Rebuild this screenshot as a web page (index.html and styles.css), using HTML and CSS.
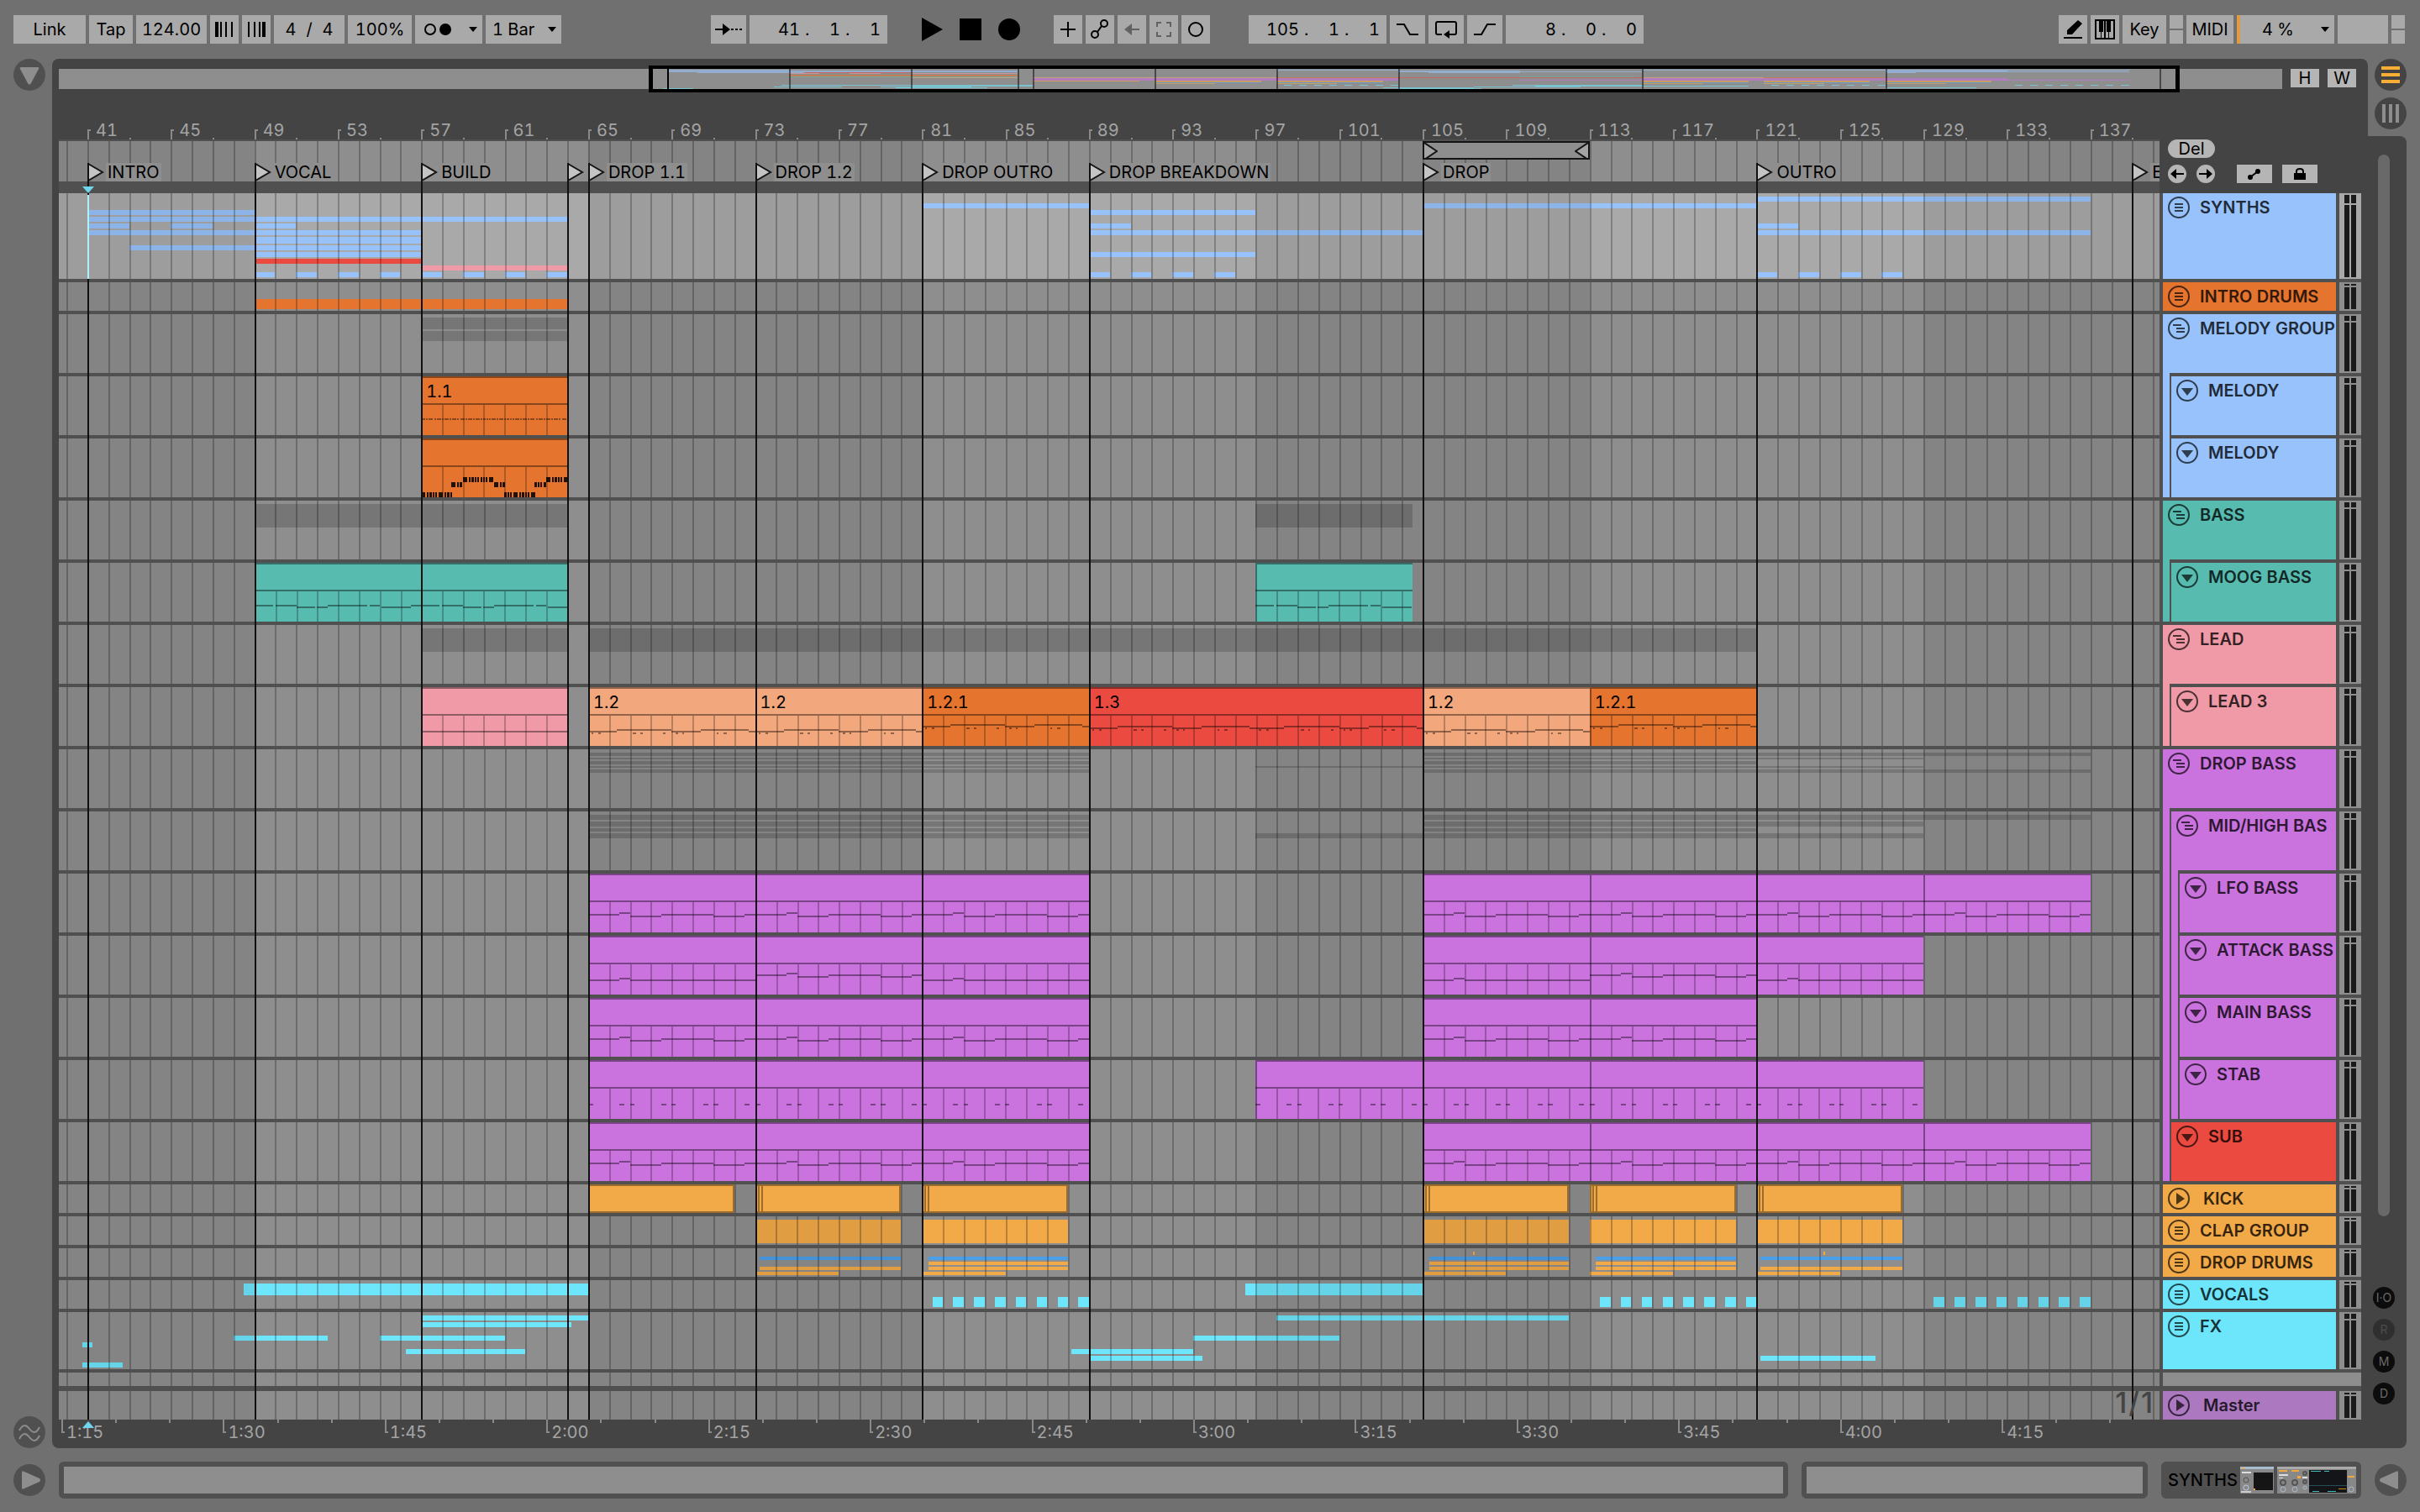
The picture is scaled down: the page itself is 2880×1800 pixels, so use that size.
FILE: index.html
```html
<!DOCTYPE html>
<html lang="en">
<head>
	<meta charset="UTF-8">
	<title>Arrangement</title>
	<link rel="stylesheet" href="styles.css">
</head>
<body>
	<svg class="defs" aria-hidden="true">
		<symbol id="grid"></symbol>
		<symbol id="icon-list" viewBox="0 0 26 26"><circle cx="13" cy="13" r="12" fill="none" stroke="currentColor" stroke-width="2"/><path d="M8 9h10M8 13h10M8 17h10" stroke="currentColor" stroke-width="2"/></symbol>
		<symbol id="icon-group" viewBox="0 0 26 26"><circle cx="13" cy="13" r="12" fill="none" stroke="currentColor" stroke-width="2"/><path d="M6 9h10M10 13h10M10 17h10" stroke="currentColor" stroke-width="2"/></symbol>
		<symbol id="icon-down" viewBox="0 0 26 26"><circle cx="13" cy="13" r="12" fill="none" stroke="currentColor" stroke-width="2"/><path d="M6 10h14l-7 9z" fill="currentColor"/></symbol>
		<symbol id="icon-right" viewBox="0 0 26 26"><circle cx="13" cy="13" r="12" fill="none" stroke="currentColor" stroke-width="2"/><path d="M10 6v14l10-7z" fill="currentColor"/></symbol>
	</svg>

	<header class="toolbar">
		<div class="tools">
			<button class="w86">Link</button>
			<button class="w52">Tap</button>
			<input class="w84" type="text" value="124.00" aria-label="Tempo">
			<button class="w34" aria-label="Nudge down"><svg width="24" height="18"><path d="M1 0h4v18h-4zM7 0h2v18h-2zM13 0h2v18h-2zM20 0h2v18h-2z"/></svg></button>
			<button class="w34" aria-label="Nudge up"><svg width="24" height="18"><path d="M2 0h2v18h-2zM9 0h2v18h-2zM15 0h2v18h-2zM19 0h4v18h-4z"/></svg></button>
			<button class="w84 signature"><span>4</span><span>/</span><span>4</span></button>
			<input class="w76" type="text" value="100%" aria-label="Groove amount">
			<button class="w80 metronome" aria-label="Metronome">
				<svg width="34" height="16"><circle cx="8" cy="8" r="6" fill="none" stroke="#000" stroke-width="2"/><circle cx="26" cy="8" r="7"/></svg>
				<svg width="10" height="6"><path d="M0 0h10l-5 6z"/></svg>
			</button>
			<div class="select w90"><select aria-label="Quantization"><option>1 Bar</option></select></div>
		</div>
		<div class="space-left"></div>
		<div class="tools">
			<button class="w42" aria-label="Follow"><svg width="32" height="18"><path d="M0 8h9V2l9 7-9 7v-6H0zM19 8h3v2h-3zM24 8h3v2h-3zM29 8h3v2h-3z"/></svg></button>
			<div class="position"><input value="41" aria-label="Bar"><i>.</i><input value="1" aria-label="Beat"><i>.</i><input value="1" aria-label="Sixteenth"></div>
		</div>
		<div class="transport">
			<button aria-label="Play"><svg width="26" height="28"><path d="M1 0v28l25-14z"/></svg></button>
			<button aria-label="Stop"><svg width="26" height="26"><path d="M0 0h26v26H0z"/></svg></button>
			<button aria-label="Record"><svg width="26" height="26"><circle cx="13" cy="13" r="13"/></svg></button>
		</div>
		<div class="tools">
			<button class="w34" aria-label="Overdub"><svg width="18" height="18"><path d="M8 0h2v18h-2zM0 8h18v2H0z"/></svg></button>
			<button class="w34" aria-label="Automation arm"><svg width="24" height="24" fill="none" stroke="#000" stroke-width="2"><circle cx="17" cy="5" r="4"/><circle cx="6" cy="18" r="4"/><path d="M14 8 9 15"/></svg></button>
			<button class="w34" aria-label="Re-enable automation"><svg width="18" height="16" fill="#626262"><path d="M0 8l9-7v6h9v2H9v6z"/></svg></button>
			<button class="w34" aria-label="Capture"><svg width="18" height="18" fill="none" stroke="#626262" stroke-width="2"><path d="M1 6V1h5M12 1h5v5M17 12v5h-5M6 17H1v-5"/></svg></button>
			<button class="w34" aria-label="Session record"><svg width="18" height="18"><circle cx="9" cy="9" r="8" fill="none" stroke="#000" stroke-width="2"/></svg></button>
		</div>
		<div class="tools loop-tools">
			<div class="position"><input value="105" aria-label="Loop bar"><i>.</i><input value="1" aria-label="Loop beat"><i>.</i><input value="1" aria-label="Loop sixteenth"></div>
			<button class="w42" aria-label="Punch in"><svg width="26" height="18" fill="none" stroke="#000" stroke-width="2"><path d="M0 3h9l7 12h10"/></svg></button>
			<button class="w42" aria-label="Loop"><svg width="28" height="24" fill="none" stroke="#000" stroke-width="2"><path d="M9 18H4q-2 0-2-2V5q0-2 2-2h20q2 0 2 2v11q0 2-2 2h-6"/><path d="M11 18l7-5v10z" fill="#000" stroke="none"/></svg></button>
			<button class="w42" aria-label="Punch out"><svg width="26" height="18" fill="none" stroke="#000" stroke-width="2"><path d="M0 15h9l7-12h10"/></svg></button>
			<div class="position"><input value="8" aria-label="Loop bars"><i>.</i><input value="0" aria-label="Loop beats"><i>.</i><input value="0" aria-label="Loop sixteenths"></div>
		</div>
		<div class="space-right"></div>
		<div class="tools">
			<button class="w34" aria-label="Draw mode"><svg width="24" height="24"><path d="M1 21h22v2H1zM5 18v-5L18 1l5 4-12 13z"/></svg></button>
			<button class="w34" aria-label="Computer keyboard"><svg width="24" height="24"><path d="M1 1h22v22H1z" fill="none" stroke="#000" stroke-width="2"/><path d="M5 1h5v14H5zM14 1h5v14h-5zM7 15h1v8H7zM16 15h1v8h-1zM11 1h2v22h-2z"/></svg></button>
			<button class="w52">Key</button>
			<div class="leds"><span></span><span></span></div>
			<button class="w56">MIDI</button>
			<div class="select cpu w116"><select aria-label="CPU load"><option>4 %</option></select></div>
			<div class="blank"></div>
			<div class="leds"><span></span><span></span></div>
		</div>
	</header>

	<main class="main">
		<nav class="left-rail">
			<button class="round" aria-label="Browser"><svg width="38" height="38"><path d="M9 10h20q2 0 1 2l-9 17q-2 3-4 0L8 12q-1-2 1-2z" fill="#8e8e8e"/></svg></button>
			<button class="round" aria-label="Groove pool"><svg width="38" height="38" fill="none" stroke="#8e8e8e" stroke-width="2"><path d="M7 17c4-8 8-7 12-2s8 6 12-2M7 27c4-8 8-7 12-2s8 6 12-2"/></svg></button>
		</nav>

		<section class="panel">
			<div class="overview-row">
				<div class="overview">
					<svg id="overview"></svg>
					<div class="frame"></div>
				</div>
				<button class="small-button">H</button>
				<button class="small-button">W</button>
			</div>
			<div class="arranger">
				<div class="timeline">
					<div class="ruler" id="ruler"></div>
					<div class="scrub" id="scrub"></div>
					<div class="band"></div>
					<div class="lanes" id="lanes"></div>
					<div class="seconds" id="seconds"></div>
					<div class="overlay" id="overlay"></div>
					<div class="zoom"><span>1</span><span>/</span><span>1</span></div>
				</div>
				<div class="side">
					<div class="locator-tools">
						<button class="pill">Del</button>
						<div class="locator-row">
							<button class="dot" aria-label="Previous locator"><svg width="16" height="12"><path d="M0 6l7-6v5h9v2H7v5z"/></svg></button>
							<button class="dot" aria-label="Next locator"><svg width="16" height="12"><path d="M16 6L9 0v5H0v2h9v5z"/></svg></button>
							<button class="flat automation" aria-label="Automation mode"><svg width="16" height="14"><circle cx="3" cy="11" r="3"/><circle cx="12" cy="4" r="3"/><path d="M3 11l9-7" stroke="#000" stroke-width="2"/></svg></button>
							<button class="flat" aria-label="Lock envelopes"><svg width="14" height="14"><path d="M0 6h14v8H0z"/><path d="M3 7V4q0-3 4-3t4 3v3" fill="none" stroke="#000" stroke-width="2"/></svg></button>
						</div>
					</div>
					<div class="tracks">
						<div class="names">
							<div class="head blue selected"><svg><use href="#icon-list"/></svg>SYNTHS</div>
							<div class="head orange small"><svg><use href="#icon-list"/></svg>INTRO DRUMS</div>
							<div class="group blue">
								<div class="head tall"><svg><use href="#icon-group"/></svg>MELODY GROUP</div>
								<div class="children">
									<div class="head blue tall"><svg><use href="#icon-down"/></svg>MELODY</div>
									<div class="head blue tall"><svg><use href="#icon-down"/></svg>MELODY</div>
								</div>
							</div>
							<div class="group teal">
								<div class="head tall"><svg><use href="#icon-group"/></svg>BASS</div>
								<div class="children">
									<div class="head teal tall"><svg><use href="#icon-down"/></svg>MOOG BASS</div>
								</div>
							</div>
							<div class="group pink">
								<div class="head tall"><svg><use href="#icon-group"/></svg>LEAD</div>
								<div class="children">
									<div class="head pink tall"><svg><use href="#icon-down"/></svg>LEAD 3</div>
								</div>
							</div>
							<div class="group purple">
								<div class="head tall"><svg><use href="#icon-group"/></svg>DROP BASS</div>
								<div class="children">
									<div class="group purple">
										<div class="head tall"><svg><use href="#icon-group"/></svg>MID/HIGH BAS</div>
										<div class="children">
											<div class="head purple tall"><svg><use href="#icon-down"/></svg>LFO BASS</div>
											<div class="head purple tall"><svg><use href="#icon-down"/></svg>ATTACK BASS</div>
											<div class="head purple tall"><svg><use href="#icon-down"/></svg>MAIN BASS</div>
											<div class="head purple tall"><svg><use href="#icon-down"/></svg>STAB</div>
										</div>
									</div>
									<div class="head red tall"><svg><use href="#icon-down"/></svg>SUB</div>
								</div>
							</div>
							<div class="head amber small folded"><svg><use href="#icon-right"/></svg>KICK</div>
							<div class="head amber small"><svg><use href="#icon-list"/></svg>CLAP GROUP</div>
							<div class="head amber small"><svg><use href="#icon-list"/></svg>DROP DRUMS</div>
							<div class="head cyan small"><svg><use href="#icon-list"/></svg>VOCALS</div>
							<div class="head cyan fx"><svg><use href="#icon-list"/></svg>FX</div>
							<div class="empty spare"></div>
							<div class="head violet small master folded"><svg><use href="#icon-right"/></svg>Master</div>
						</div>
						<div class="meters" id="meters"></div>
					</div>
				</div>
			</div>
		</section>

		<nav class="view-rail">
			<button class="round" aria-label="Arrangement view"><svg width="38" height="38" fill="#f9ae37"><path d="M8 9h22v4H8zM8 17h22v4H8zM8 25h22v4H8z"/></svg></button>
			<button class="round" aria-label="Session view"><svg width="38" height="38" fill="#8e8e8e"><path d="M9 8h4v22H9zM17 8h4v22h-4zM25 8h4v22h-4z"/></svg></button>
		</nav>
		<aside class="scroll-rail">
			<div class="thumb"></div>
			<div class="toggles">
				<button>I·O</button>
				<button class="off">R</button>
				<button>M</button>
				<button>D</button>
			</div>
		</aside>
	</main>

	<footer class="footer">
		<button class="round" aria-label="Help view"><svg width="38" height="38"><path d="M10 10q0-3 3-1l18 8q2 2 0 4l-18 8q-3 2-3-1z" fill="#8e8e8e"/></svg></button>
		<div class="status info"></div>
		<div class="status"></div>
		<div class="devices">
			<span>SYNTHS</span>
			<svg width="40" height="32"><path d="M0 0h40v32H0z" fill="#888"/><path d="M0 0h40v3H0z" fill="#a9bdd0"/><path d="M2 1h3v2H2z" fill="#f0a840"/><path d="M16 7h23v21H16z" fill="#151515"/><path d="M2 6h11v2H2z" fill="#ddd"/><path d="M16 26h2v2h-2z" fill="#f0a840"/><circle cx="7" cy="16" r="3" fill="none" stroke="#555" stroke-width="1"/><circle cx="7" cy="25" r="3" fill="none" stroke="#bcd" stroke-width="1"/><path d="M1 29h12v2H1z" fill="#ccc"/></svg>
			<svg width="94" height="32"><path d="M0 0h94v32H0z" fill="#888"/><path d="M0 0h94v3H0z" fill="#aaa"/><path d="M2 4h10v2H2zM17 4h9v2h-9zM24 11h4v3h-4zM84 11h8v2h-8z" fill="#f0a840"/><path d="M2 9h11v2H2zM2 13h5v1H2zM30 12h6v2h-6z" fill="#ddd"/><path d="M38 4h45v27H38z" fill="#131518"/><path d="M38 22h45v1H38z" fill="#244d58"/><path d="M40 5h12v1H40zM56 5h6v1h-6zM42 29h8v1h-8zM60 29h10v1H60z" fill="#4bb"/><path d="M73 26h9v1h-9z" fill="#c80"/><g fill="none" stroke="#555" stroke-width="2"><circle cx="7" cy="19" r="3"/><circle cx="21" cy="19" r="3"/><circle cx="33" cy="18" r="2"/><circle cx="33" cy="8" r="2"/></g><g fill="none" stroke="#abc" stroke-width="1"><circle cx="7" cy="27" r="3"/><circle cx="21" cy="27" r="3"/><circle cx="33" cy="25" r="2"/><circle cx="88" cy="27" r="3"/></g></svg>
		</div>
		<button class="round" aria-label="Device view"><svg width="38" height="38"><path d="M28 10q0-3-3-1L7 17q-2 2 0 4l18 8q3 2 3-1z" fill="#8e8e8e"/></svg></button>
	</footer>
	<script src="script.js"></script>
</body>
</html>
```
FILE: script.js
```js
// all positions are bar numbers, turned into a percentage of the timeline
function pos(bar){
	return (34 + (bar - 41) * 24.83) / 25;
}
function span(a, b){
	return pos(b) - pos(a);
}
function rect(x, y, w, h, fill){
	return '<rect x="' + x + '%" y="' + y + '" width="' + w + '" height="' + h + '" fill="' + fill + '"/>';
}

var BLUE = '#97c2fb', ORANGE = '#e5742e', SALMON = '#f2a77c', RED = '#ea4a40', PINK = '#f09aa7',
	TEAL = '#57bbaf', PURPLE = '#ca72de', AMBER = '#f2a948', CYAN = '#6de5fb', SKY = '#4a9fea',
	SHADE = 'rgba(0,0,0,.17)';

// grid: 16 bar stripes and a line on every bar
var grid = '', i;
[[33, 49], [65, 81], [97, 113], [129, 145]].forEach(function(s){
	var from = Math.max(pos(s[0]), 0);
	grid += rect(from, 0, (pos(s[1]) - from) + '%', '100%', 'rgba(0,0,0,.07)');
});
for (i = 40; i < 141; i++) {
	grid += rect(pos(i), 0, 2, '100%', 'rgba(0,0,0,.24)');
}
document.getElementById('grid').innerHTML = grid;
var gridSvg = '<svg class="grid"><use href="#grid" width="100%" height="100%"/></svg>';

// note patterns: [start, end, y]
var LINE8 = [[0, 1.5, 48], [1.5, 2, 46], [2, 3.5, 50], [3.5, 6, 48], [6, 7.5, 50], [7.5, 8, 48]];
var FLAT8 = [[0, 1.5, 52], [1.5, 2, 50], [2, 8, 52]];
var STAB = [[0, 0.25, 52], [1.5, 1.75, 52], [2, 2.2, 52], [3.5, 3.75, 52], [4, 4.2, 52], [5.5, 5.75, 52], [6, 6.25, 52], [7.5, 7.75, 52]];
var LEAD8 = [[0, 1.35, 52], [1.35, 4, 50], [4, 5.4, 52], [5.4, 7.7, 50], [7.7, 8, 52], [0.15, 0.25, 54], [0.5, 0.6, 54],
	[2.15, 2.3, 54], [2.5, 2.6, 54], [3.6, 3.7, 54], [4.2, 4.3, 54], [4.5, 4.6, 54], [6.15, 6.25, 54], [6.5, 6.65, 54]];
var BASS8 = [[0, 0.9, 50], [1, 2, 50], [2, 2.9, 52], [3, 3.5, 52], [3.5, 5.4, 50], [5.5, 6, 50], [6.1, 7.5, 52], [7.5, 8, 50]];
function shift(notes, dy, dx){
	return notes.map(function(n){ return [n[0] + (dx || 0), n[1] + (dx || 0), n[2] + dy]; });
}
var LEAD16 = shift(LEAD8, -4).concat(shift(LEAD8, -4, 8));
var TICKS = [];
for (i = 0; i < 56; i++) {
	TICKS.push([i / 8, i / 8 + (i % 3 ? 0.08 : 0.12), 50]);
}
// repeated short notes of the second melody clip
var STEPS = [];
[[0, 1.45, 64], [1.45, 2, 52], [2, 3.5, 46], [3.5, 4, 52], [4, 5.45, 64], [5.45, 6, 52], [6, 7, 46]].forEach(function(s){
	for (var t = s[0], n = 0; t < s[1]; t += 0.14, n++) {
		STEPS.push([t, t + (n % 3 ? 0.08 : 0.12), s[2], 6]);
	}
});

// bars of a folded group: rows of [y, height, colour, [from, to, ...]]
// clips of a track: [from, to, colour, notes, name]
var lanes = [
	{size: 'selected', rows: [
		[4, 6, BLUE, [121, 137]],
		[12, 6, BLUE, [81, 89, 105, 121]],
		[20, 6, BLUE, [41, 49, 89, 97]],
		[28, 6, BLUE, [41, 64]],
		[36, 6, BLUE, [41, 43, 45, 47, 49, 51, 89, 91, 121, 123]],
		[44, 6, BLUE, [41, 57, 89, 105, 121, 137]],
		[52, 8, BLUE, [49, 57]],
		[62, 6, BLUE, [43, 57]],
		[70, 6, BLUE, [49, 57, 89, 97]],
		[78, 6, RED, [49, 57]],
		[86, 6, PINK, [57, 64]],
		[94, 6, BLUE, [49, 50, 51, 52, 53, 54, 55, 56, 57, 58, 59, 60, 61, 62, 63, 64, 89, 90, 91, 92, 93, 94, 95, 96, 121, 122, 123, 124, 125, 126, 127, 128]]
	]},
	{size: 'small', rows: [[20, 12, ORANGE, [49, 64]]]},
	{size: 'tall', rows: [[4, 14, SHADE, [57, 64]], [20, 12, SHADE, [57, 64]]]},
	{size: 'tall', clips: [[57, 64, ORANGE, TICKS, '1.1']]},
	{size: 'tall', clips: [[57, 64, ORANGE, STEPS, '', 'dark']]},
	{size: 'tall', rows: [[4, 28, SHADE, [49, 64, 97, 104.5]]]},
	{size: 'tall', clips: [[49, 57, TEAL, BASS8], [57, 64, TEAL, BASS8], [97, 104.5, TEAL, BASS8]]},
	{size: 'tall', rows: [[4, 28, SHADE, [57, 64, 65, 121]]]},
	{size: 'tall', clips: [[57, 64, PINK, [[0, 7, 52]]], [65, 73, SALMON, LEAD8, '1.2'], [73, 81, SALMON, LEAD8, '1.2'],
		[81, 89, ORANGE, shift(LEAD8, -6), '1.2.1'], [89, 105, RED, LEAD16, '1.3'], [105, 113, SALMON, LEAD8, '1.2'],
		[113, 121, ORANGE, shift(LEAD8, -6), '1.2.1']]},
	{size: 'tall', rows: [
		[4, 4, SHADE, [65, 89, 105, 137]],
		[10, 2, SHADE, [65, 89, 105, 129]],
		[14, 4, SHADE, [65, 89, 105, 121]],
		[20, 2, SHADE, [65, 89, 97, 129]],
		[24, 4, SHADE, [65, 89, 105, 137]]
	]},
	{size: 'tall', rows: [
		[4, 6, SHADE, [65, 89, 105, 137]],
		[12, 6, SHADE, [65, 89, 105, 129]],
		[20, 4, SHADE, [65, 89, 105, 121]],
		[26, 6, SHADE, [65, 89, 97, 129]]
	]},
	{size: 'tall', clips: same([65, 73, 81, 105, 113, 121, 129], LINE8)},
	{size: 'tall', clips: [[65, 73, PURPLE, FLAT8], [73, 81, PURPLE, shift(LINE8, -2)], [81, 89, PURPLE, FLAT8],
		[105, 113, PURPLE, FLAT8], [113, 121, PURPLE, shift(LINE8, -2)], [121, 129, PURPLE, FLAT8]]},
	{size: 'tall', clips: same([65, 73, 81, 105, 113], LINE8)},
	{size: 'tall', clips: same([65, 73, 81, 97, 105, 113, 121], STAB)},
	{size: 'tall', clips: same([65, 73, 81, 105, 113, 121, 129], LINE8)},
	{size: 'small', kicks: [65, 73, 81, 105, 113, 121]},
	{size: 'small', rows: [[4, 28, AMBER, [73, 80, 81, 88, 105, 112, 113, 120, 121, 128]]]},
	{size: 'small', rows: [
		[4, 4, AMBER, [107.4, 107.5, 124.2, 124.3]],
		[10, 4, SKY, [73.2, 80, 81.3, 88, 105.3, 112, 113.3, 120, 121.2, 128]],
		[16, 4, AMBER, [81.3, 88, 105.3, 112, 113.3, 120]],
		[22, 4, AMBER, [73.2, 80, 81.3, 88, 105.3, 112, 113.3, 120, 121.2, 128]],
		[28, 4, AMBER, [73, 77, 81, 85, 105, 109, 113, 117, 121, 125]]
	]},
	{size: 'small', rows: [
		[4, 14, CYAN, [48.5, 65, 96.5, 105]],
		[20, 12, CYAN, pulses(81.5).concat(pulses(113.5), pulses(129.5))]
	]},
	{size: 'fx', rows: [
		[4, 6, CYAN, [57, 65, 98, 112]],
		[12, 6, CYAN, [57, 64.2]],
		[28, 6, CYAN, [48, 52.5, 55, 61, 94, 101]],
		[36, 6, CYAN, [40.75, 41.25]],
		[44, 6, CYAN, [56.25, 62, 88.15, 94]],
		[52, 6, CYAN, [89, 94.45, 121.2, 126.7]],
		[60, 6, CYAN, [40.75, 42.7]]
	]},
	{size: 'spare'},
	{size: 'small master'}
];

function same(starts, notes){
	return starts.map(function(s){ return [s, s + 8, PURPLE, notes]; });
}
function pulses(from){
	var out = [];
	for (var n = 0; n < 8; n++) {
		out.push(from + n, from + n + 0.5);
	}
	return out;
}

function rowSvg(rows){
	var s = '<svg class="bars">';
	rows.forEach(function(r){
		for (var n = 0; n < r[3].length; n += 2) {
			s += rect(pos(r[3][n]), r[0], span(r[3][n], r[3][n + 1]) + '%', r[1], r[2]);
		}
	});
	return s + '</svg>';
}

function clip(c){
	var len = c[1] - c[0];
	var ink = c[5] ? 'rgba(0,0,0,.85)' : 'rgba(0,0,0,.4)';
	var s = '<div class="clip" style="left:' + pos(c[0]) + '%;width:' + span(c[0], c[1]) + '%;background-color:' + c[2] + '">';
	s += '<span>' + (c[4] || '') + '</span><svg>';
	for (var b = 1; b < len; b++) {
		s += rect(b / len * 100, 34, 2, 36, 'rgba(0,0,0,.24)');
	}
	c[3].forEach(function(n){
		if (n[0] < len) {
			s += rect(n[0] / len * 100, n[2], (Math.min(n[1], len) - n[0]) / len * 100 + '%', n[3] || 2, ink);
		}
	});
	return s + '</svg></div>';
}

var html = '', meters = '';
lanes.forEach(function(lane){
	html += '<div class="lane ' + lane.size + '">';
	if (lane.rows) {
		html += rowSvg(lane.rows);
	}
	html += gridSvg;
	(lane.clips || []).forEach(function(c){
		html += clip(c);
	});
	(lane.kicks || []).forEach(function(k){
		html += '<div class="kick" style="left:' + pos(k) + '%;width:' + span(k, k + 7) + '%">' + (k > 65 ? '<i></i>' : '') + '</div>';
	});
	html += '</div>';
	meters += lane.size == 'spare' ? '<div class="empty spare"></div>' : '<div class="meter ' + lane.size + '"><i></i><i></i><b></b><b></b></div>';
});
document.getElementById('lanes').innerHTML = html;
document.getElementById('meters').innerHTML = meters;

// bar ruler
html = '';
for (i = 41; i < 140; i += 2) {
	if ((i - 41) % 4 == 0) {
		html += '<span class="major" style="left:' + pos(i) + '%">' + i + '</span>';
	} else {
		html += '<span class="minor" style="left:' + pos(i) + '%"></span>';
	}
}
document.getElementById('ruler').innerHTML = html;

// time ruler, 124 bpm
html = '';
for (i = 75; i <= 265; i += 5) {
	var left = pos(1 + i * 124 / 240);
	if (i % 15 == 0) {
		html += '<span class="major" style="left:' + left + '%">' + Math.floor(i / 60) + ':' + ('0' + i % 60).slice(-2) + '</span>';
	} else {
		html += '<span class="minor" style="left:' + left + '%"></span>';
	}
}
document.getElementById('seconds').innerHTML = html;

// locators and the loop brace
var locators = [[41, 'INTRO'], [49, 'VOCAL'], [57, 'BUILD'], [64, ''], [65, 'DROP 1.1'], [73, 'DROP 1.2'], [81, 'DROP OUTRO'],
	[89, 'DROP BREAKDOWN'], [105, 'DROP'], [121, 'OUTRO'], [139, 'E']];
html = gridSvg + '<div class="loop" style="left:' + pos(105) + '%;width:' + span(105, 113) + '%">' +
	'<svg width="16" height="20"><path d="M0 0l15 10L0 20"/></svg><svg width="16" height="20"><path d="M16 0L1 10l15 10"/></svg></div>';
var lines = '';
locators.forEach(function(l){
	html += '<button class="locator" style="left:' + pos(l[0]) + '%"><svg width="20" height="22"><path d="M1 1l17 10L1 21z"/></svg>' +
		(l[1] ? '<span>' + l[1] + '</span>' : '') + '</button>';
	lines += '<div class="line" style="left:' + pos(l[0]) + '%"></div>';
});
document.getElementById('scrub').innerHTML = html;
lines += '<div class="playhead" style="left:' + pos(41) + '%"></div><div class="playhead-foot" style="left:' + pos(41) + '%"></div>';
document.getElementById('overlay').innerHTML = lines;

// overview: [y, height, colour, [from, to, ...]]
var mini = [
	[1, 1, BLUE, [41, 49, 81, 89, 105, 137]],
	[2, 2, BLUE, [41, 64, 89, 97, 121, 129]],
	[4, 1, BLUE, [43, 57, 91, 97, 121, 123]],
	[3, 1, BLUE, [97, 105, 129, 137]],
	[4, 1, RED, [50, 57]],
	[5, 1, PINK, [49, 51, 53, 55, 57, 64]],
	[7, 2, ORANGE, [49, 64]],
	[9, 1, TEAL, [49, 64, 97, 104.5]],
	[10, 1, SALMON, [57, 64, 65, 81, 105, 113]],
	[10, 1, ORANGE, [81, 89, 113, 121]],
	[10, 1, RED, [89, 105]],
	[11, 3, PURPLE, [65, 89, 105, 129]],
	[13, 1, PURPLE, [97, 105, 129, 137]],
	[14, 1, AMBER, [65, 72, 73, 80, 81, 88, 105, 112, 113, 120, 121, 128]],
	[15, 1, AMBER, [73, 80, 81, 88, 105, 112, 113, 120, 121, 128]],
	[16, 1, SKY, [73, 80, 81, 88, 105, 112, 113, 120, 121, 128]],
	[17, 1, AMBER, [73, 77, 81, 85, 105, 109, 113, 117, 121, 125]],
	[19, 1, CYAN, [48.5, 65, 96.5, 105].concat(pulses(81.5), pulses(113.5), pulses(129.5))],
	[20, 1, CYAN, [57, 65, 98, 112]],
	[21, 1, CYAN, [48, 52.5, 55, 61, 94, 101]],
	[22, 1, CYAN, [56, 62, 88, 94, 121, 127]],
	[23, 1, CYAN, [40.7, 42.7, 89, 94.5]]
];
function mpos(bar){
	return (724 + (bar - 41) * 18.12) / 26.46;
}
html = '<g opacity=".6">';
mini.forEach(function(r){
	for (var n = 0; n < r[3].length; n += 2) {
		html += rect(mpos(r[3][n]), r[0], mpos(r[3][n + 1]) - mpos(r[3][n]) + '%', r[1], r[2]);
	}
});
html += '</g>';
locators.forEach(function(l){
	html += rect(mpos(l[0]), 0, 2, 24, l[0] == 41 ? '#000' : 'rgba(0,0,0,.5)');
});
document.getElementById('overview').innerHTML = html;
```
FILE: styles.css
```css
* {
	box-sizing: border-box;
}
body {
	margin: 0;
	min-height: 100vh;
	display: flex;
	flex-direction: column;
	background: #707070;
	color: #000;
	font: 20px/24px Inter, "Liberation Sans", sans-serif;
	font-variant-numeric: tabular-nums;
}
button, input, select {
	font: inherit;
	font-variant-numeric: inherit;
	color: inherit;
	border: 0;
	padding: 0;
	margin: 0;
	border-radius: 0;
	background: none;
}
svg {
	display: block;
	flex: none;
}
.defs {
	position: absolute;
	width: 0;
	height: 0;
}

/* toolbar */
.toolbar {
	display: flex;
	align-items: center;
	height: 70px;
	padding: 0 18px 0 16px;
}
.tools {
	display: flex;
	gap: 4px;
}
.tools > button, .tools > input, .select, .position, .blank {
	height: 34px;
	background: #a9a9a9;
	text-align: center;
}
.tools > button {
	display: flex;
	align-items: center;
	justify-content: center;
}
.space-left { flex: 178; }
.space-right { flex: 494; }
.w34 { width: 34px; }
.w42 { width: 42px; }
.w52 { width: 52px; }
.w56 { width: 56px; }
.w76 { width: 76px; }
.w80 { width: 80px; }
.w84 { width: 84px; }
.w86 { width: 86px; }
.w90 { width: 90px; }
.w116 { width: 116px; }
.tools > .signature { gap: 12px; }
.tools > .metronome {
	justify-content: space-between;
	padding: 0 6px 0 10px;
}
.select {
	position: relative;
}
.select select {
	appearance: none;
	width: 100%;
	height: 34px;
	padding: 0 8px;
}
.select::after {
	content: "";
	position: absolute;
	right: 6px;
	top: 14px;
	border: 5px solid transparent;
	border-top: 6px solid #000;
	border-bottom: 0;
}
.cpu {
	border-left: 4px solid #e09a42;
}
.cpu select {
	padding: 0 26px;
}
.position {
	display: flex;
	align-items: center;
	width: 164px;
	padding-right: 8px;
}
.position input {
	width: 28px;
	text-align: right;
}
.position input:first-child {
	flex: 1;
	min-width: 0;
}
.position i {
	width: 20px;
	padding-left: 6px;
	font-style: normal;
	text-align: left;
}
.transport {
	display: flex;
	align-items: center;
	gap: 20px;
	padding: 0 40px;
}
.loop-tools {
	margin-left: 46px;
}
.blank { width: 60px; }
.leds {
	display: flex;
	flex-direction: column;
	gap: 2px;
	width: 16px;
}
.leds span {
	flex: 1;
	background: #a9a9a9;
}

/* main area */
.main {
	flex: 1;
	display: grid;
	grid-template-columns: 62px minmax(0, 1fr) 46px 16px;
	grid-template-rows: 92px 1fr;
}
.left-rail {
	grid-row: 1 / 3;
	display: flex;
	flex-direction: column;
	justify-content: space-between;
	padding-left: 16px;
}
.round {
	width: 38px;
	height: 38px;
	border-radius: 50%;
	background: #505050;
	flex: none;
}
.panel {
	grid-column: 2;
	grid-row: 1 / 3;
	padding: 12px 8px 0;
	border-radius: 8px 8px 0 8px;
	background: #444;
}
.view-rail {
	display: flex;
	flex-direction: column;
	gap: 8px;
	padding-left: 8px;
}
.view-rail .round {
	background: #444;
}
.scroll-rail {
	grid-column: 3;
	grid-row: 2;
	display: flex;
	flex-direction: column;
	padding: 22px 0 52px 12px;
	border-radius: 0 8px 8px 0;
	background: #444;
}
.thumb {
	width: 14px;
	flex: 1;
	margin-bottom: 84px;
	border-radius: 7px;
	background: #696969;
}
.toggles {
	display: flex;
	flex-direction: column;
	gap: 12px;
	margin-left: -6px;
}
.toggles button {
	width: 26px;
	height: 26px;
	border-radius: 50%;
	background: #0c0c0c;
	color: #6a6a6a;
	font-size: 14px;
	line-height: 26px;
}
.toggles .off {
	background: #2f2f2f;
	color: #4c4c4c;
}

/* overview */
.overview-row {
	display: flex;
	gap: 10px;
	padding-right: 6px;
}
.overview {
	position: relative;
	flex: 1;
	height: 24px;
	background: #8e8e8e;
}
.overview svg {
	width: 100%;
	height: 24px;
	shape-rendering: crispEdges;
}
.frame {
	position: absolute;
	top: -4px;
	bottom: -4px;
	left: 26.53%;
	right: 4.61%;
	border: 4px solid #000;
	border-width: 4px 5px;
}
.small-button {
	width: 34px;
	height: 22px;
	line-height: 22px;
	background: #b5b5b5;
}

/* timeline */
.arranger {
	display: flex;
}
.timeline {
	position: relative;
	flex: 1;
	overflow: hidden;
}
.ruler {
	position: relative;
	height: 62px;
	border-bottom: 2px solid #505050;
	color: #a4a4a4;
}
.ruler span, .seconds span {
	position: absolute;
	border-left: 2px solid #8a8a8a;
}
.ruler .major {
	bottom: 0;
	padding-left: 8px;
	height: 24px;
	line-height: 26px;
	border-image: linear-gradient(transparent 50%, #8a8a8a 50%) 1;
	border-width: 0 0 0 2px;
}
.ruler .major::before, .seconds .major::before {
	content: "";
	position: absolute;
	left: 0;
	width: 2px;
	height: 2px;
	background: #8a8a8a;
}
.ruler .major::before { top: 12px; }
.ruler .minor {
	bottom: 0;
	height: 2px;
}
.scrub {
	position: relative;
	height: 48px;
	background: #8e8e8e;
}
.band {
	height: 14px;
	background: #505050;
}
.grid, .bars {
	position: absolute;
	left: 0;
	top: 0;
	width: 100%;
	height: 100%;
	shape-rendering: crispEdges;
}
.loop {
	position: absolute;
	top: 0;
	height: 22px;
	display: flex;
	justify-content: space-between;
	border: 2px solid #141414;
	background: #8e8e8e;
}
.loop svg {
	height: 18px;
	fill: #a4a4a4;
	stroke: #141414;
	stroke-width: 2;
}
.locator {
	position: absolute;
	bottom: 0;
	display: flex;
	gap: 2px;
	height: 22px;
	line-height: 22px;
	white-space: nowrap;
}
.locator svg {
	fill: #c4c4c4;
	stroke: #141414;
	stroke-width: 2;
}
.locator span {
	padding: 0 2px;
	background: #8e8e8e;
}
.lanes {
	display: flex;
	flex-direction: column;
	gap: 4px;
	background: #505050;
}
.lane {
	position: relative;
	background: #8e8e8e;
}
.selected { height: 102px; }
.tall { height: 70px; }
.small { height: 34px; }
.fx { height: 68px; }
.spare { height: 16px; }
.master { margin-top: 2px; }
.lane.selected, .meter.selected {
	background: #a9a9a9;
}
.clip {
	position: absolute;
	top: 0;
	height: 100%;
	border-top: 2px solid rgba(0, 0, 0, .4);
	box-shadow: inset 2px 0 rgba(0, 0, 0, .4);
}
.clip span {
	display: block;
	height: 32px;
	padding: 4px 0 0 6px;
	border-bottom: 2px solid rgba(0, 0, 0, .4);
}
.clip svg {
	position: absolute;
	left: 0;
	top: -2px;
	width: 100%;
	height: 70px;
	shape-rendering: crispEdges;
}
.kick {
	position: absolute;
	top: 0;
	height: 100%;
	border: 2px solid #9c6c2c;
	background: #f2a948;
}
.kick i {
	display: block;
	width: 6px;
	height: 30px;
	margin-left: 1px;
	border: 2px solid #9c6c2c;
	border-width: 0 2px;
}
.seconds {
	position: relative;
	height: 34px;
	color: #a4a4a4;
}
.seconds .major {
	top: 0;
	height: 16px;
	padding-left: 4px;
	line-height: 31px;
}
.seconds .major::before { bottom: 0; }
.seconds .minor {
	top: 0;
	height: 4px;
}
.overlay {
	position: absolute;
	top: 88px;
	bottom: 34px;
	left: 0;
	right: 0;
	pointer-events: none;
}
.line {
	position: absolute;
	top: 0;
	bottom: 0;
	width: 2px;
	background: #111;
}
.playhead {
	position: absolute;
	top: 38px;
	width: 2px;
	height: 100px;
	background: #aef0fb;
}
.playhead::before {
	content: "";
	position: absolute;
	left: -6px;
	top: -10px;
	border: 7px solid transparent;
	border-top: 8px solid #6fd6ee;
	border-bottom: 0;
}
.playhead-foot {
	position: absolute;
	bottom: -10px;
	margin-left: -6px;
	border: 7px solid transparent;
	border-bottom: 8px solid #6fd6ee;
	border-top: 0;
}
.zoom {
	position: absolute;
	right: 8px;
	bottom: 36px;
	display: flex;
	gap: 2px;
	color: #444;
	font-size: 34px;
	line-height: 36px;
	font-weight: 500;
	font-variant-numeric: normal;
}

/* track headers */
.side {
	display: flex;
	flex-direction: column;
	width: 240px;
}
.locator-tools {
	height: 124px;
	padding: 60px 0 0 10px;
}
.pill {
	display: block;
	width: 56px;
	height: 22px;
	line-height: 22px;
	border-radius: 11px;
	background: #b5b5b5;
}
.locator-row {
	display: flex;
	gap: 12px;
	margin-top: 8px;
}
.dot, .flat {
	display: flex;
	align-items: center;
	justify-content: center;
	width: 22px;
	height: 22px;
	border-radius: 50%;
	background: #b5b5b5;
}
.flat {
	width: 42px;
	border-radius: 0;
}
.automation {
	margin-left: 14px;
}
.tracks {
	display: grid;
	grid-template-columns: 1fr 26px;
	gap: 4px;
	padding-left: 4px;
	background: #505050;
}
.names, .meters, .children {
	display: flex;
	flex-direction: column;
	gap: 4px;
	min-width: 0;
}
.children {
	margin-left: 8px;
	padding: 4px 0 0 2px;
	background: #505050;
}
.head {
	display: flex;
	gap: 12px;
	padding: 4px 0 0 6px;
	overflow: hidden;
	white-space: nowrap;
	line-height: 26px;
	font-weight: 600;
	color: rgba(0, 0, 0, .8);
}
.head svg {
	width: 26px;
	height: 26px;
	opacity: .85;
}
.folded { gap: 16px; }
.blue { background: #97c2fb; }
.orange { background: #e5742e; }
.teal { background: #57bbaf; }
.pink { background: #f09aa7; }
.purple { background: #ca72de; }
.red { background: #ea4a40; }
.amber { background: #f2a948; }
.cyan { background: #6de5fb; }
.violet { background: #ac79c1; }
.empty { background: #8e8e8e; }
.names .empty { box-shadow: 4px 0 #8e8e8e; }
.meter {
	display: grid;
	grid-template-columns: 6px 6px;
	grid-template-rows: 6px 1fr;
	gap: 2px;
	padding: 2px 6px;
	background: #8e8e8e;
}
.meter.selected { grid-template-rows: 10px 1fr; }
.meter.small { grid-template-rows: 2px 1fr; }
.meter i, .meter b {
	background: #1a1a1a;
}

/* footer */
.footer {
	display: flex;
	align-items: center;
	height: 76px;
	padding: 0 16px;
}
.status {
	flex: 400;
	height: 44px;
	margin-right: 16px;
	border: 6px solid #505050;
	border-radius: 6px;
	background: #8e8e8e;
}
.info {
	flex: 2046;
	margin-left: 16px;
}
.devices {
	display: flex;
	align-items: center;
	gap: 4px;
	width: 238px;
	height: 44px;
	margin-right: 16px;
	padding-left: 8px;
	border-radius: 6px;
	background: #505050;
	font-weight: 500;
}
.devices span {
	width: 82px;
}
```
